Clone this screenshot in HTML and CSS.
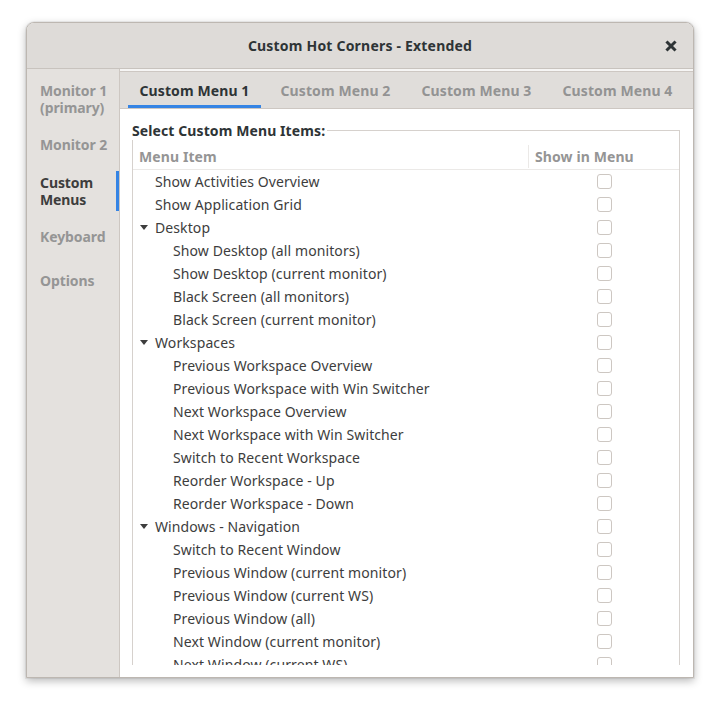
FILE: index.html
```html
<!DOCTYPE html>
<html>
<head>
<meta charset="utf-8">
<link rel="stylesheet" href="styles.css">
</head>
<body>
<div class="window">
  <div class="titlebar">
    <span class="title">Custom Hot Corners - Extended</span>
    <span class="close"><svg width="12" height="12" viewBox="0 0 12 12"><path d="M2.5 2.5L9.5 9.5M9.5 2.5L2.5 9.5" stroke="#2e3436" stroke-width="3" stroke-linecap="square"/></svg></span>
  </div>
  <div class="main">
    <div class="sidebar">
      <div class="side-item two">Monitor 1<br>(primary)</div>
      <div class="side-item">Monitor 2</div>
      <div class="side-item two active spaced">Custom<br>Menus</div>
      <div class="side-item">Keyboard</div>
      <div class="side-item spaced">Options</div>
    </div>
    <div class="content">
      <div class="tabs">
        <div class="tab active">Custom Menu 1</div>
        <div class="tab">Custom Menu 2</div>
        <div class="tab">Custom Menu 3</div>
        <div class="tab">Custom Menu 4</div>
      </div>
      <div class="page">
        <div class="scroller">
          <div class="frame-label"><span>Select Custom Menu Items:</span></div>
          <div class="frame">
            <div class="thead">
              <div class="th col1">Menu Item</div>
              <div class="th col2">Show in Menu</div>
            </div>
            <div class="row l0"><span class="name">Show Activities Overview</span><span class="cb"></span></div>
            <div class="row l0"><span class="name">Show Application Grid</span><span class="cb"></span></div>
            <div class="row l0 exp"><span class="arrow"></span><span class="name">Desktop</span><span class="cb"></span></div>
            <div class="row l1"><span class="name">Show Desktop (all monitors)</span><span class="cb"></span></div>
            <div class="row l1"><span class="name">Show Desktop (current monitor)</span><span class="cb"></span></div>
            <div class="row l1"><span class="name">Black Screen (all monitors)</span><span class="cb"></span></div>
            <div class="row l1"><span class="name">Black Screen (current monitor)</span><span class="cb"></span></div>
            <div class="row l0 exp"><span class="arrow"></span><span class="name">Workspaces</span><span class="cb"></span></div>
            <div class="row l1"><span class="name">Previous Workspace Overview</span><span class="cb"></span></div>
            <div class="row l1"><span class="name">Previous Workspace with Win Switcher</span><span class="cb"></span></div>
            <div class="row l1"><span class="name">Next Workspace Overview</span><span class="cb"></span></div>
            <div class="row l1"><span class="name">Next Workspace with Win Switcher</span><span class="cb"></span></div>
            <div class="row l1"><span class="name">Switch to Recent Workspace</span><span class="cb"></span></div>
            <div class="row l1"><span class="name">Reorder Workspace - Up</span><span class="cb"></span></div>
            <div class="row l1"><span class="name">Reorder Workspace - Down</span><span class="cb"></span></div>
            <div class="row l0 exp"><span class="arrow"></span><span class="name">Windows - Navigation</span><span class="cb"></span></div>
            <div class="row l1"><span class="name">Switch to Recent Window</span><span class="cb"></span></div>
            <div class="row l1"><span class="name">Previous Window (current monitor)</span><span class="cb"></span></div>
            <div class="row l1"><span class="name">Previous Window (current WS)</span><span class="cb"></span></div>
            <div class="row l1"><span class="name">Previous Window (all)</span><span class="cb"></span></div>
            <div class="row l1"><span class="name">Next Window (current monitor)</span><span class="cb"></span></div>
            <div class="row l1"><span class="name">Next Window (current WS)</span><span class="cb"></span></div>
            <div class="row l1"><span class="name">Next Window (all)</span><span class="cb"></span></div>
          </div>
        </div>
      </div>
    </div>
  </div>
</div>
</body>
</html>
```
FILE: styles.css
```css
* { box-sizing: border-box; }
html, body { margin: 0; padding: 0; background: #ffffff; }
body {
  font-family: "Noto Sans", "Open Sans", sans-serif;
  font-size: 14px;
  color: #3d3d3d;
  width: 720px;
  height: 708px;
  overflow: hidden;
}
.window {
  margin: 22px 0 0 26px;
  width: 668px;
  height: 656px;
  background: #f6f5f4;
  border: 1px solid #bdb7b1;
  border-radius: 8px 8px 0 0;
  box-shadow: 0 3px 9px rgba(0,0,0,0.28), 0 0 0 1px rgba(0,0,0,0.05);
  display: flex;
  flex-direction: column;
  overflow: hidden;
}
.titlebar {
  height: 46px;
  flex: none;
  background: #dedbd8;
  border-bottom: 1px solid #c8c3be;
  display: flex;
  align-items: center;
  justify-content: center;
  position: relative;
}
.title {
  font-weight: bold;
  font-size: 14px;
  color: #2e3436;
  letter-spacing: 0.2px;
}
.close {
  position: absolute;
  right: 16px;
  top: 17px;
  width: 12px;
  height: 12px;
  display: flex;
}
.main {
  flex: 1;
  display: flex;
  min-height: 0;
}
.sidebar {
  width: 93px;
  flex: none;
  background: #e4e1de;
  border-right: 1px solid #cdc7c2;
  padding-top: 10px;
  display: flex;
  flex-direction: column;
  gap: 8px;
}
.side-item {
  height: 34px;
  padding-left: 13px;
  display: flex;
  align-items: center;
  font-weight: bold;
  color: #959595;
  line-height: 17px;
  letter-spacing: -0.1px;
}
.side-item.two { height: 40px; }
.side-item.spaced { margin-top: 2px; }
.side-item.active {
  color: #3d3d3d;
  box-shadow: inset -3px 0 0 #3584e4;
}
.content {
  flex: 1;
  display: flex;
  flex-direction: column;
  padding-top: 2px;
  min-width: 0;
}
.tabs {
  height: 38px;
  flex: none;
  background: #e0ddda;
  border-top: 1px solid #cdc7c2;
  border-bottom: 1px solid #cdc7c2;
  display: flex;
  padding-left: 8px;
  gap: 8px;
}
.tab {
  width: 133px;
  display: flex;
  align-items: center;
  justify-content: center;
  font-weight: bold;
  color: #939393;
  letter-spacing: 0.1px;
}
.tab.active {
  color: #2e3436;
  box-shadow: inset 0 -3px 0 #3584e4;
}
.page {
  flex: 1;
  background: #ffffff;
  padding: 12px 13px 12px 12px;
  min-height: 0;
  display: flex;
}
.scroller {
  flex: 1;
  overflow: hidden;
  display: flex;
  flex-direction: column;
}
.frame-label {
  height: 18px;
  flex: none;
  font-weight: bold;
  color: #2e3436;
  display: flex;
  align-items: center;
  position: relative;
  letter-spacing: 0.1px;
}
.frame-label span {
  background: #ffffff;
  padding-right: 2px;
  position: relative;
  z-index: 1;
}
.frame-label::after {
  content: "";
  position: absolute;
  left: 0;
  right: 0;
  top: 9px;
  border-top: 1px solid #d6d1cd;
}
.frame {
  border-left: 1px solid #d6d1cd;
  border-right: 1px solid #d6d1cd;
  margin-top: -9px;
  padding-top: 14px;
  flex: none;
}
.thead {
  height: 26px;
  display: flex;
  border-bottom: 1px solid #ebe9e7;
}
.th {
  font-weight: bold;
  color: #959595;
  display: flex;
  align-items: center;
  letter-spacing: 0.1px;
}
.th.col1 {
  width: 396px;
  padding-left: 6px;
  border-right: 1px solid #ebe9e7;
  margin: 1px 0 1px 0;
}
.th.col2 {
  flex: 1;
  padding-left: 6px;
}
.row {
  height: 23px;
  display: flex;
  align-items: center;
  position: relative;
  letter-spacing: 0.1px;
}
.row .name { flex: none; }
.row.l0 { padding-left: 22px; }
.row.l1 { padding-left: 40px; }
.arrow {
  position: absolute;
  left: 7px;
  top: 9px;
  width: 0;
  height: 0;
  border-left: 4.5px solid transparent;
  border-right: 4.5px solid transparent;
  border-top: 5px solid #3d3d3d;
}
.cb {
  position: absolute;
  left: 464px;
  top: 4px;
  width: 15px;
  height: 15px;
  border: 1px solid #cdc7c2;
  border-radius: 3px;
  background: #ffffff;
}
```
